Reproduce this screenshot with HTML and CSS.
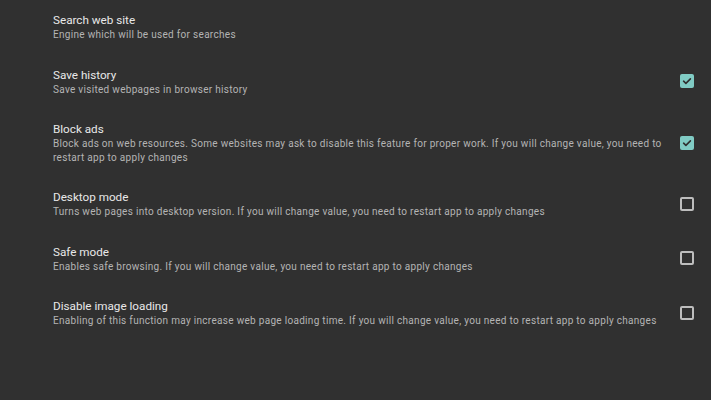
FILE: index.html
```html
<!DOCTYPE html>
<html lang="en">
<head>
    <meta charset="UTF-8">
    <meta name="viewport" content="width=device-width, initial-scale=1.0">
    <title>Settings</title>
    <link rel="stylesheet" href="styles.css">
</head>
<body>
    <div class="settings-list">
        <div class="setting-row">
            <div class="setting-text">
                <div class="setting-title">Search web site</div>
                <div class="setting-summary">Engine which will be used for searches</div>
            </div>
        </div>

        <div class="setting-row">
            <div class="setting-text">
                <div class="setting-title">Save history</div>
                <div class="setting-summary">Save visited webpages in browser history</div>
            </div>
            <span class="checkbox checked">
                <svg viewBox="0 0 14 14" width="14" height="14"><path d="M3.6 7.2 L5.9 9.4 L10.4 4.9" fill="none" stroke="#2f2f2f" stroke-width="1.6" stroke-linecap="round" stroke-linejoin="round"/></svg>
            </span>
        </div>

        <div class="setting-row">
            <div class="setting-text">
                <div class="setting-title">Block ads</div>
                <div class="setting-summary">Block ads on web resources. Some websites may ask to disable this feature for proper work. If you will change value, you need to restart app to apply changes</div>
            </div>
            <span class="checkbox checked">
                <svg viewBox="0 0 14 14" width="14" height="14"><path d="M3.6 7.2 L5.9 9.4 L10.4 4.9" fill="none" stroke="#2f2f2f" stroke-width="1.6" stroke-linecap="round" stroke-linejoin="round"/></svg>
            </span>
        </div>

        <div class="setting-row">
            <div class="setting-text">
                <div class="setting-title">Desktop mode</div>
                <div class="setting-summary">Turns web pages into desktop version. If you will change value, you need to restart app to apply changes</div>
            </div>
            <span class="checkbox"></span>
        </div>

        <div class="setting-row">
            <div class="setting-text">
                <div class="setting-title">Safe mode</div>
                <div class="setting-summary">Enables safe browsing. If you will change value, you need to restart app to apply changes</div>
            </div>
            <span class="checkbox"></span>
        </div>

        <div class="setting-row">
            <div class="setting-text">
                <div class="setting-title">Disable image loading</div>
                <div class="setting-summary">Enabling of this function may increase web page loading time. If you will change value, you need to restart app to apply changes</div>
            </div>
            <span class="checkbox"></span>
        </div>
    </div>
</body>
</html>
```

FILE: styles.css
```css
body {
    margin: 0;
    height: 400px;
    background: #303030;
    font-family: 'Roboto', 'Liberation Sans', sans-serif;
    overflow: hidden;
}

.settings-list {
    display: flex;
    flex-direction: column;
}

.setting-row {
    display: flex;
    align-items: center;
    gap: 16px;
    padding: 12px 17px 13px 53px;
}

.setting-text {
    flex: 1;
    min-width: 0;
}

.setting-title {
    font-size: 11.7px;
    line-height: 16px;
    color: #e8e8e8;
}

.setting-summary {
    font-size: 10px;
    line-height: 13.5px;
    letter-spacing: 0.3px;
    color: #b4b4b4;
}

.checkbox {
    flex: none;
    width: 14px;
    height: 14px;
    box-sizing: border-box;
    border: 2px solid #bdbdbd;
    border-radius: 2px;
    display: flex;
}

.checkbox.checked {
    border: none;
    background: #80cbc4;
}
```
